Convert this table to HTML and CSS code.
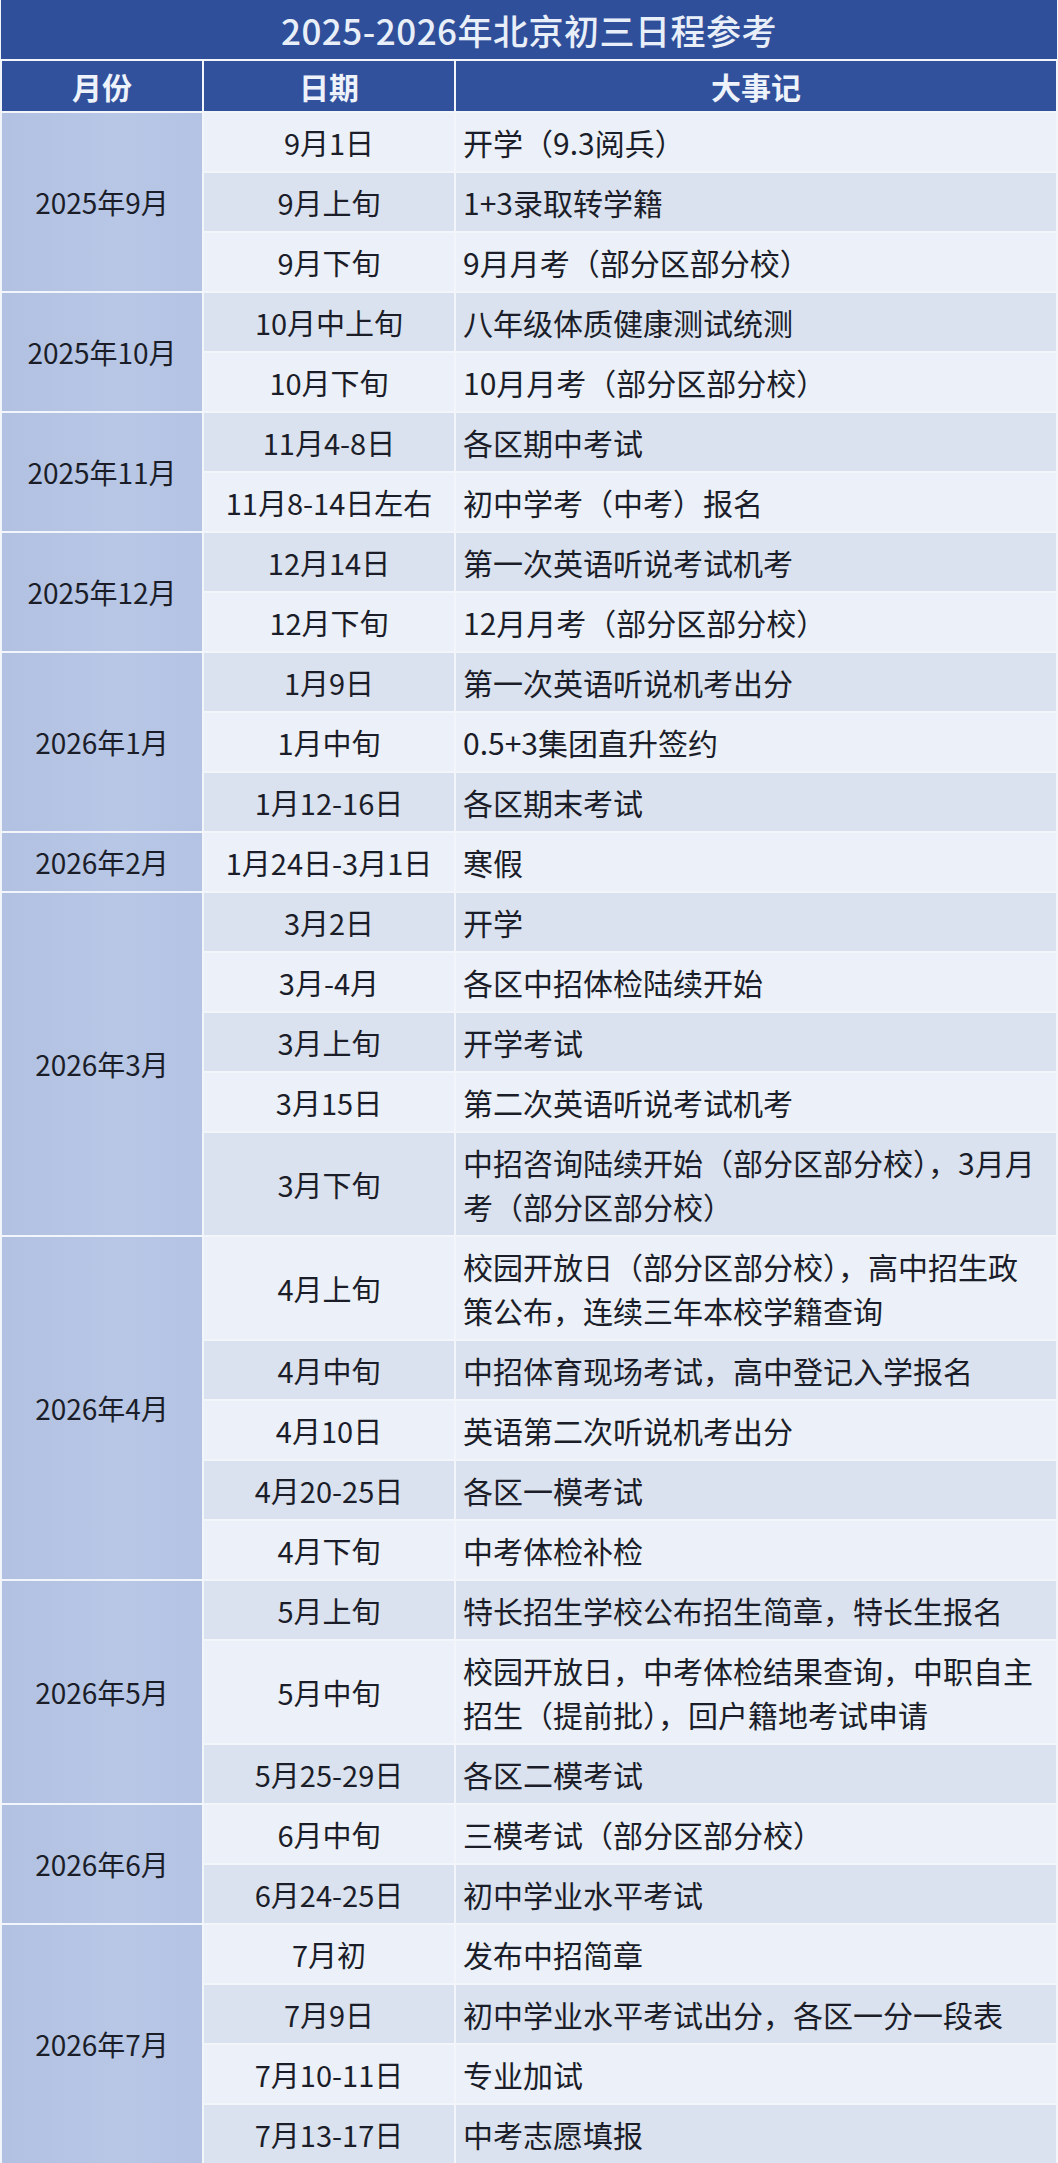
FILE: index.html
```html
<!DOCTYPE html>
<html lang="zh-CN">
<head>
<meta charset="utf-8">
<title>2025-2026年北京初三日程参考</title>
<link rel="stylesheet" href="styles.css">
</head>
<body>
<div class="sheet">
  <div class="title">2025-2026年北京初三日程参考</div>
  <div class="table">
    <div class="th">月份</div><div class="th">日期</div><div class="th">大事记</div>

    <div class="month span3">2025年9月</div>
    <div class="date l">9月1日</div><div class="event l">开学（9.3阅兵）</div>
    <div class="date d">9月上旬</div><div class="event d">1+3录取转学籍</div>
    <div class="date l">9月下旬</div><div class="event l">9月月考（部分区部分校）</div>

    <div class="month span2">2025年10月</div>
    <div class="date d">10月中上旬</div><div class="event d">八年级体质健康测试统测</div>
    <div class="date l">10月下旬</div><div class="event l">10月月考（部分区部分校）</div>

    <div class="month span2">2025年11月</div>
    <div class="date d">11月4-8日</div><div class="event d">各区期中考试</div>
    <div class="date l">11月8-14日左右</div><div class="event l">初中学考（中考）报名</div>

    <div class="month span2">2025年12月</div>
    <div class="date d">12月14日</div><div class="event d">第一次英语听说考试机考</div>
    <div class="date l">12月下旬</div><div class="event l">12月月考（部分区部分校）</div>

    <div class="month span3">2026年1月</div>
    <div class="date d">1月9日</div><div class="event d">第一次英语听说机考出分</div>
    <div class="date l">1月中旬</div><div class="event l">0.5+3集团直升签约</div>
    <div class="date d">1月12-16日</div><div class="event d">各区期末考试</div>

    <div class="month">2026年2月</div>
    <div class="date l">1月24日-3月1日</div><div class="event l">寒假</div>

    <div class="month span5">2026年3月</div>
    <div class="date d">3月2日</div><div class="event d">开学</div>
    <div class="date l">3月-4月</div><div class="event l">各区中招体检陆续开始</div>
    <div class="date d">3月上旬</div><div class="event d">开学考试</div>
    <div class="date l">3月15日</div><div class="event l">第二次英语听说考试机考</div>
    <div class="date d tall">3月下旬</div><div class="event d tall">中招咨询陆续开始（部分区部分校），3月月<br>考（部分区部分校）</div>

    <div class="month span5">2026年4月</div>
    <div class="date l tall">4月上旬</div><div class="event l tall">校园开放日（部分区部分校），高中招生政<br>策公布，连续三年本校学籍查询</div>
    <div class="date d">4月中旬</div><div class="event d">中招体育现场考试，高中登记入学报名</div>
    <div class="date l">4月10日</div><div class="event l">英语第二次听说机考出分</div>
    <div class="date d">4月20-25日</div><div class="event d">各区一模考试</div>
    <div class="date l">4月下旬</div><div class="event l">中考体检补检</div>

    <div class="month span3">2026年5月</div>
    <div class="date d">5月上旬</div><div class="event d">特长招生学校公布招生简章，特长生报名</div>
    <div class="date l tall">5月中旬</div><div class="event l tall">校园开放日，中考体检结果查询，中职自主<br>招生（提前批），回户籍地考试申请</div>
    <div class="date d">5月25-29日</div><div class="event d">各区二模考试</div>

    <div class="month span2">2026年6月</div>
    <div class="date l">6月中旬</div><div class="event l">三模考试（部分区部分校）</div>
    <div class="date d">6月24-25日</div><div class="event d">初中学业水平考试</div>

    <div class="month span4">2026年7月</div>
    <div class="date l">7月初</div><div class="event l">发布中招简章</div>
    <div class="date d">7月9日</div><div class="event d">初中学业水平考试出分，各区一分一段表</div>
    <div class="date l">7月10-11日</div><div class="event l">专业加试</div>
    <div class="date d">7月13-17日</div><div class="event d">中考志愿填报</div>
  </div>
</div>
</body>
</html>
```

FILE: styles.css
```css
html, body {
  margin: 0;
  padding: 0;
  background: #f4f7fc;
}

body {
  font-family: "Noto Sans CJK SC", "Noto Sans", sans-serif;
  color: #1b1e29;
}

.sheet {
  width: 1058px;
  background: #f2f6fb;
}

.title {
  height: 59px;
  margin: 0 1px 2px 1px;
  background: #2f4f9b;
  color: #e9eff8;
  font-size: 35px;
  font-weight: 500;
  display: flex;
  align-items: center;
  justify-content: center;
  letter-spacing: 0.5px;
}

.table {
  display: grid;
  grid-template-columns: 200px 250px 1fr;
  grid-template-rows: 50px;
  grid-auto-rows: minmax(58px, auto);
  gap: 2px;
  padding: 0 2px;
}

.th {
  background: #31519d;
  color: #eef3fb;
  font-size: 30px;
  font-weight: 700;
  display: flex;
  align-items: center;
  justify-content: center;
}

.month {
  background: linear-gradient(90deg, #b2c1e1 0%, #b8c7e6 60%, #b4c3e3 100%);
  font-size: 28px;
  display: flex;
  align-items: center;
  justify-content: center;
}

.span2 { grid-row: span 2; }
.span3 { grid-row: span 3; }
.span4 { grid-row: span 4; }
.span5 { grid-row: span 5; }

.date, .event {
  display: flex;
  align-items: center;
  white-space: nowrap;
}

.date {
  font-size: 29px;
  justify-content: center;
}

.event {
  font-size: 30px;
  padding-left: 7px;
}

.tall {
  min-height: 102px;
  line-height: 44px;
}

.l {
  background: #ecf0f8;
}

.d {
  background: #dbe2ef;
}
```
